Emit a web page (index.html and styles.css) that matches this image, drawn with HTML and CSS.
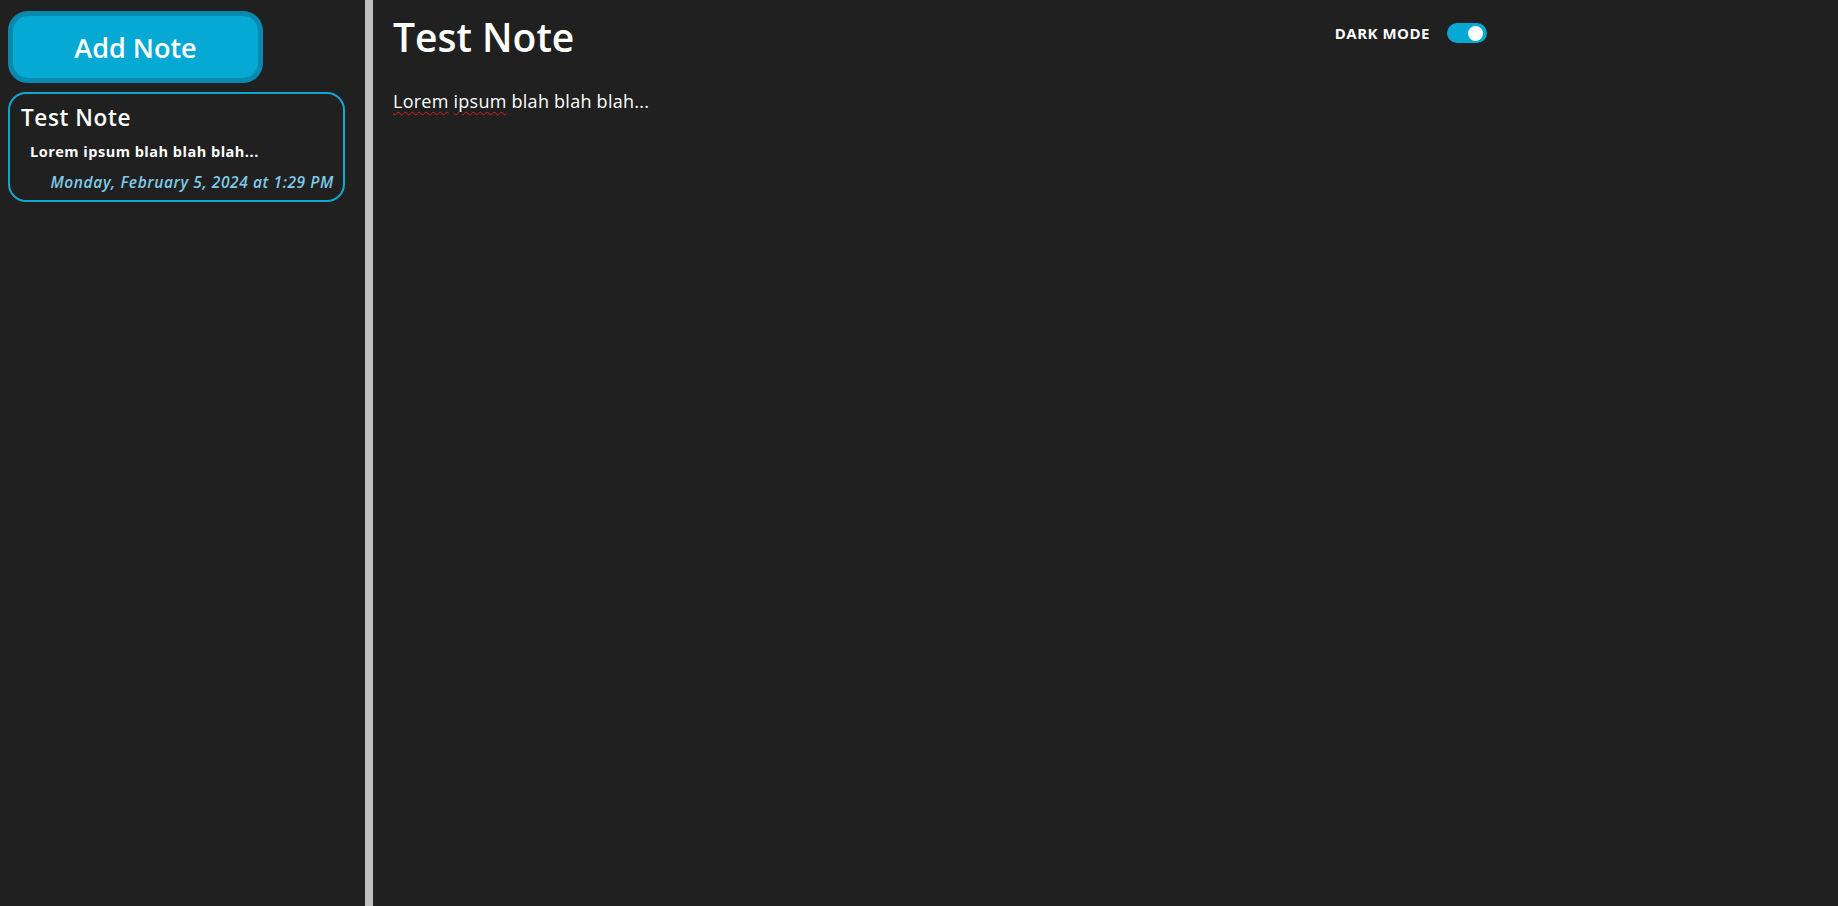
FILE: index.html
```html
<!DOCTYPE html>
<html lang="en">
<head>
<meta charset="utf-8">
<title>Notes</title>
<link rel="stylesheet" href="styles.css">
</head>
<body>
<div class="app">
  <aside class="sidebar">
    <button class="add-btn">Add Note</button>
    <div class="note-card">
      <div class="note-title">Test Note</div>
      <div class="note-snippet">Lorem ipsum blah blah blah...</div>
      <div class="note-date">Monday, February 5, 2024 at 1:29 PM</div>
    </div>
  </aside>
  <div class="divider"></div>
  <main class="main">
    <header class="main-header">
      <h1 class="main-title">Test Note</h1>
      <div class="mode">
        <span class="mode-label">DARK MODE</span>
        <span class="toggle"><span class="knob"></span></span>
      </div>
    </header>
    <div class="main-body"><span class="misspelled">Lorem</span> <span class="misspelled">ipsum</span> blah blah blah...</div>
  </main>
</div>
</body>
</html>
```
FILE: styles.css
```css
* { box-sizing: border-box; }
html, body { margin: 0; height: 100%; }
body {
  background: #202020;
  color: #ffffff;
  font-family: "Open Sans", "Noto Sans", sans-serif;
}
.app {
  display: flex;
  height: 906px;
}
.sidebar {
  width: 365px;
  padding: 11px 8px 0 8px;
  display: flex;
  flex-direction: column;
  align-items: flex-start;
}
.add-btn {
  width: 255px;
  height: 72px;
  background: #05a9d3;
  border: 5px solid #0889ad;
  border-radius: 20px;
  color: #fff;
  font-family: "Open Sans", sans-serif;
  font-weight: 600;
  font-size: 27px;
  padding: 0;
  margin-bottom: 9px;
}
.note-card {
  width: 337px;
  height: 110px;
  border: 2px solid #10a8d2;
  border-radius: 18px;
  padding: 10px 9px 0 11px;
}
.note-title {
  font-size: 22.5px;
  font-weight: 600;
  line-height: 28px;
  letter-spacing: 0.6px;
}
.note-snippet {
  font-size: 14.5px;
  font-weight: 700;
  margin: 11px 0 0 9px;
  line-height: 18px;
  letter-spacing: 0.5px;
}
.note-date {
  font-size: 15.5px;
  font-style: italic;
  font-weight: 600;
  color: #7fcbe8;
  text-align: right;
  margin-top: 12px;
  line-height: 18px;
  letter-spacing: 0.6px;
}
.divider {
  width: 8px;
  background: #c0c0c0;
}
.main {
  flex: 1;
  padding: 12px 0 0 20px;
}
.main-header {
  display: flex;
  align-items: center;
  justify-content: space-between;
  width: 1094px;
}
.main-title {
  margin: 0;
  font-size: 39px;
  font-weight: 600;
  line-height: 50px;
}
.mode {
  display: flex;
  align-items: center;
  gap: 17px;
  margin-top: -8px;
}
.mode-label {
  font-size: 15px;
  font-weight: 700;
  letter-spacing: 0.5px;
}
.toggle {
  width: 40px;
  height: 20px;
  border-radius: 10px;
  background: #05a9d3;
  display: flex;
  align-items: center;
  justify-content: flex-end;
  padding-right: 4px;
}
.knob {
  width: 15px;
  height: 15px;
  border-radius: 50%;
  background: #fff;
}
.main-body {
  margin-top: 27px;
  font-size: 18px;
  line-height: 24px;
  letter-spacing: 0.25px;
}
.misspelled {
  text-decoration: underline wavy #e02020;
  text-decoration-thickness: 1px;
  text-underline-offset: 3px;
}
```
